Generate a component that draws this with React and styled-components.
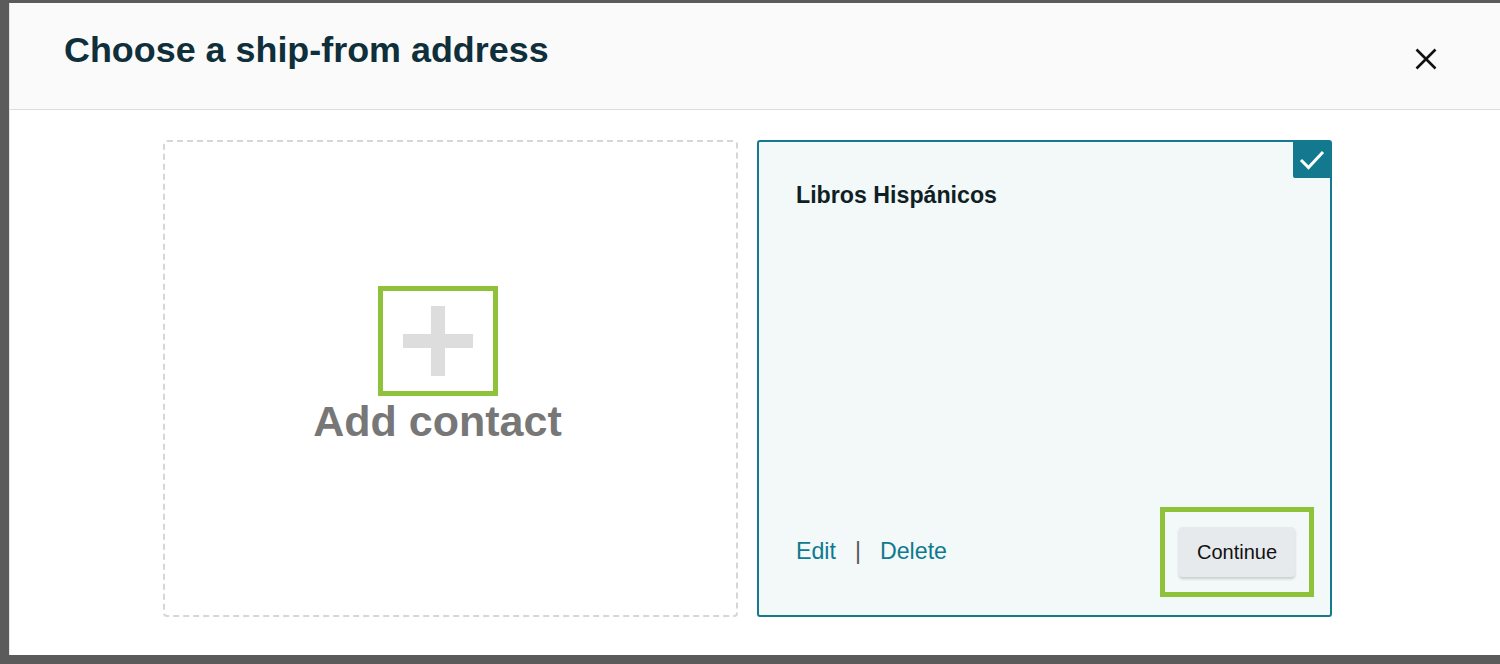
import React from "react";
import styled, { createGlobalStyle } from "styled-components";

const GlobalStyle = createGlobalStyle`
  html, body {
    margin: 0;
    padding: 0;
    height: 100%;
    background: #5b5b5b;
    font-family: "Liberation Sans", Arial, sans-serif;
    overflow: hidden;
  }
  #root {
    height: 100%;
  }
`;

const Backdrop = styled.div`
  height: 664px;
  padding: 3px 0 9px 9px;
  box-sizing: border-box;
  display: flex;
`;

const Modal = styled.div`
  flex: 1;
  background: #ffffff;
  display: flex;
  flex-direction: column;
  border-left: 1px solid #e4e4e4;
`;

const Header = styled.header`
  height: 107px;
  box-sizing: border-box;
  background: #fafafa;
  border-bottom: 1px solid #dddddd;
  display: flex;
  align-items: flex-start;
  justify-content: space-between;
  padding: 27px 60px 0 54px;
`;

const Title = styled.h1`
  margin: 0;
  font-size: 35.9px;
  font-weight: 700;
  color: #0f2f3a;
`;

const CloseButton = styled.button`
  border: none;
  background: none;
  padding: 0;
  margin-top: 15px;
  width: 28px;
  height: 28px;
  cursor: pointer;
  display: flex;
  align-items: center;
  justify-content: center;
`;

const Body = styled.div`
  display: grid;
  grid-template-columns: 575px 575px;
  gap: 19px;
  padding: 30px 0 0 153px;
`;

const AddCard = styled.div`
  height: 477px;
  box-sizing: border-box;
  border: 2px dashed #d6d6d6;
  border-radius: 4px;
  display: flex;
  flex-direction: column;
  align-items: center;
  justify-content: center;
  padding: 0 26px 26px 0;
`;

const Highlight = styled.div`
  border: 5px solid #8fc23b;
  box-sizing: border-box;
  width: ${(p) => p.$w}px;
  height: ${(p) => p.$h}px;
  display: flex;
  align-items: center;
  justify-content: center;
`;

const AddLabel = styled.div`
  font-size: 43px;
  font-weight: 700;
  color: #777777;
  margin-top: 1px;
`;

const AddressCard = styled.div`
  position: relative;
  height: 477px;
  box-sizing: border-box;
  border: 2px solid #15798f;
  border-radius: 3px;
  background: #f3f8f9;
  display: flex;
  flex-direction: column;
  justify-content: space-between;
  padding: 40px 16px 18px 37px;
`;

const CheckBadge = styled.div`
  position: absolute;
  top: -1px;
  right: -1px;
  width: 38px;
  height: 37px;
  background: #12798f;
  border-bottom-left-radius: 2px;
  display: flex;
  align-items: center;
  justify-content: center;
`;

const Name = styled.div`
  font-size: 23.2px;
  font-weight: 700;
  color: #0f1f24;
`;

const Footer = styled.div`
  display: flex;
  align-items: center;
  justify-content: space-between;
`;

const Links = styled.div`
  display: flex;
  align-items: center;
  gap: 19px;
  padding-bottom: 2px;
`;

const Link = styled.a`
  font-size: 23.2px;
  color: #0d7a8f;
  text-decoration: none;
  cursor: pointer;
`;

const Divider = styled.span`
  font-size: 23px;
  color: #555555;
`;

const ContinueButton = styled.button`
  width: 116px;
  height: 50px;
  border: none;
  border-radius: 4px;
  background: #e6eaec;
  box-shadow: 0 2px 3px rgba(0, 0, 0, 0.18);
  font-family: "Liberation Sans", Arial, sans-serif;
  font-size: 20px;
  color: #111111;
  cursor: pointer;
`;

const PlusIcon = () => (
  <svg width="70" height="70" viewBox="0 0 70 70">
    <rect x="28" y="0" width="14" height="70" fill="#dddddd" />
    <rect x="0" y="28" width="70" height="14" fill="#dddddd" />
  </svg>
);

const CheckIcon = () => (
  <svg width="26" height="22" viewBox="0 0 26 22">
    <path d="M2 11 L9.5 18.5 L24 3" fill="none" stroke="#ffffff" strokeWidth="3" />
  </svg>
);

const CloseIcon = () => (
  <svg width="22" height="22" viewBox="0 0 22 22">
    <path d="M1.5 1.5 L20.5 20.5 M20.5 1.5 L1.5 20.5" stroke="#111111" strokeWidth="2.6" />
  </svg>
);

export default function App() {
  return (
    <>
      <GlobalStyle />
      <Backdrop>
        <Modal>
          <Header>
            <Title>Choose a ship-from address</Title>
            <CloseButton aria-label="Close">
              <CloseIcon />
            </CloseButton>
          </Header>
          <Body>
            <AddCard>
              <Highlight $w={120} $h={110}>
                <PlusIcon />
              </Highlight>
              <AddLabel>Add contact</AddLabel>
            </AddCard>
            <AddressCard>
              <CheckBadge>
                <CheckIcon />
              </CheckBadge>
              <Name>Libros Hispánicos</Name>
              <Footer>
                <Links>
                  <Link>Edit</Link>
                  <Divider>|</Divider>
                  <Link>Delete</Link>
                </Links>
                <Highlight $w={154} $h={90}>
                  <ContinueButton>Continue</ContinueButton>
                </Highlight>
              </Footer>
            </AddressCard>
          </Body>
        </Modal>
      </Backdrop>
    </>
  );
}
